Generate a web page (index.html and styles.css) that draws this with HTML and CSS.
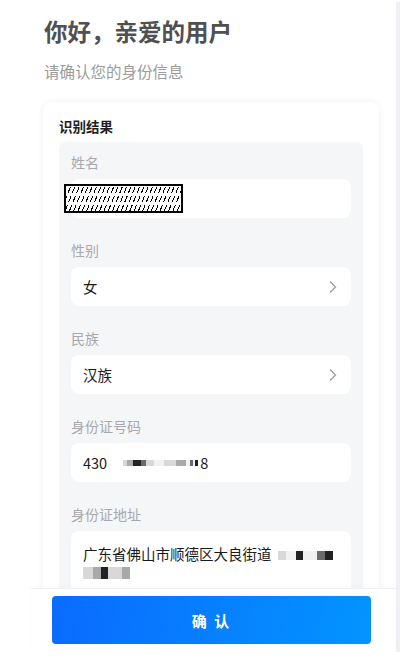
FILE: index.html
```html
<!DOCTYPE html>
<html lang="zh-CN">
<head>
<meta charset="utf-8">
<link rel="stylesheet" href="styles.css">
</head>
<body>
<div class="app">
  <div class="screen">
    <div class="content">
      <h1 class="title">你好，亲爱的用户</h1>
      <p class="subtitle">请确认您的身份信息</p>
      <section class="card">
        <h2 class="card-title">识别结果</h2>
        <div class="panel">
          <div class="field">
            <div class="label">姓名</div>
            <div class="input"><div class="redact"></div></div>
          </div>
          <div class="field">
            <div class="label">性别</div>
            <div class="input select"><span class="value">女</span>
              <svg class="chev" width="8" height="14" viewBox="0 0 8 14"><path d="M1 1.5l5.5 5.5L1 12.5" fill="none" stroke="#9a9ca2" stroke-width="1.3"/></svg>
            </div>
          </div>
          <div class="field">
            <div class="label">民族</div>
            <div class="input select"><span class="value">汉族</span>
              <svg class="chev" width="8" height="14" viewBox="0 0 8 14"><path d="M1 1.5l5.5 5.5L1 12.5" fill="none" stroke="#9a9ca2" stroke-width="1.3"/></svg>
            </div>
          </div>
          <div class="field">
            <div class="label">身份证号码</div>
            <div class="input"><span class="value">430</span><span class="mosaic m-id">
              <i class="px g1 w4"></i><i class="px g2 w6"></i><i class="px g4 w8"></i><i class="px g3 w5"></i><i class="px g1 w8"></i><i class="px g0 w10"></i><i class="px g1 w12"></i><i class="px g2 w10"></i><i class="px g0 w4"></i><i class="px g3 w3"></i><i class="px g0 w2"></i><i class="px g4 w3"></i></span><span class="value">8</span></div>
          </div>
          <div class="field">
            <div class="label">身份证地址</div>
            <div class="input multi"><span class="value">广东省佛山市顺德区大良街道</span><span class="mosaic m-a1"><i class="px g1 w8"></i><i class="px g0 w10"></i><i class="px g4 w7"></i><i class="px g0 w14"></i><i class="px g3 w8"></i><i class="px g4 w8"></i></span><br><span class="mosaic m-a2"><i class="px g1 w10"></i><i class="px g2 w8"></i><i class="px g4 w7"></i><i class="px g1 w14"></i><i class="px g2 w8"></i></span></div>
          </div>
        </div>
      </section>
    </div>
    <div class="footer">
      <button class="confirm">确 认</button>
    </div>
  </div>
  <div class="bar"></div>
</div>
</body>
</html>
```
FILE: styles.css
```css
* { box-sizing: border-box; }
html, body { margin: 0; padding: 0; background: #fff; }
body { font-family: "Noto Sans CJK SC", "Noto Sans", sans-serif; }

.app { display: flex; width: 400px; height: 652px; }
.screen { width: 396px; height: 652px; display: flex; flex-direction: column; }
.bar { width: 4px; margin-top: 2px; background: #eff0f3; }

.content { flex: 1; overflow: hidden; padding: 15px 0 0 0; }

.title { margin: 0 0 0 44px; font-size: 23.5px; line-height: 33px; font-weight: 700; color: #505050; }
.subtitle { margin: 12px 0 0 44px; font-size: 15.5px; line-height: 22px; color: #9b9b9b; }

.card { margin: 20px 0 0 43px; width: 336px; background: #fff; border-radius: 8px;
  box-shadow: 0 0 6px rgba(20, 30, 60, 0.07); padding: 14px 16px 16px 16px; }
.card-title { margin: 0; font-size: 13.5px; line-height: 20px; font-weight: 700; color: #1f1f1f; }

.panel { margin-top: 6px; background: #f5f6f8; border-radius: 6px; padding: 10px 12px 16px 12px; }
.field + .field { margin-top: 22px; }
.label { font-size: 14px; line-height: 20px; color: #a8a8ac; }
.input { margin-top: 7px; height: 39px; background: #fff; border-radius: 8px; display: flex; align-items: center; padding: 0 14px 0 12px; }
.select { justify-content: space-between; }
.value { font-size: 14.5px; color: #1a1a1a; }
.chev { display: block; }

.redact { width: 119px; height: 29px; margin-left: -19px; border: 2px solid #000;
  background:
    repeating-linear-gradient(to bottom, #fff 0 1px, transparent 1px 7px, #fff 7px 9px),
    repeating-linear-gradient(112deg, #000 0 1px, #fff 1px 4px); }

.multi { display: block; height: 70px; padding: 14px 12px 8px 12px; line-height: 16px; }

.mosaic { display: inline-flex; align-items: center; vertical-align: middle; }
.px { display: block; height: 6px; }
.m-id { margin: 0 2px 0 16px; }
.m-a1 { margin-left: 6px; }
.m-a1 .px { height: 9px; }
.m-a2 .px { height: 12px; }
.g0 { background: #f1f1f1; }
.g1 { background: #d8d8d8; }
.g2 { background: #a9a9a9; }
.g3 { background: #6b6b6b; }
.g4 { background: #222; }
.w2 { width: 2px; } .w3 { width: 3px; } .w4 { width: 4px; } .w5 { width: 5px; } .w6 { width: 6px; }
.w7 { width: 7px; } .w8 { width: 8px; } .w10 { width: 10px; } .w12 { width: 12px; } .w14 { width: 14px; }

.footer { height: 64px; margin-left: 31px; background: #fff; border-top: 1px solid #eeeff2;
  padding: 7px 25px 8px 21px; position: relative; z-index: 1; box-shadow: 0 -2px 4px rgba(0,0,0,0.02); }
.confirm { width: 100%; height: 48px; border: 0; border-radius: 4px; color: #fff;
  font-family: "Noto Sans CJK SC", sans-serif; font-size: 15px; font-weight: 700; letter-spacing: 2px;
  background: linear-gradient(100deg, #0a6bff 0%, #0394ff 100%); }
```
